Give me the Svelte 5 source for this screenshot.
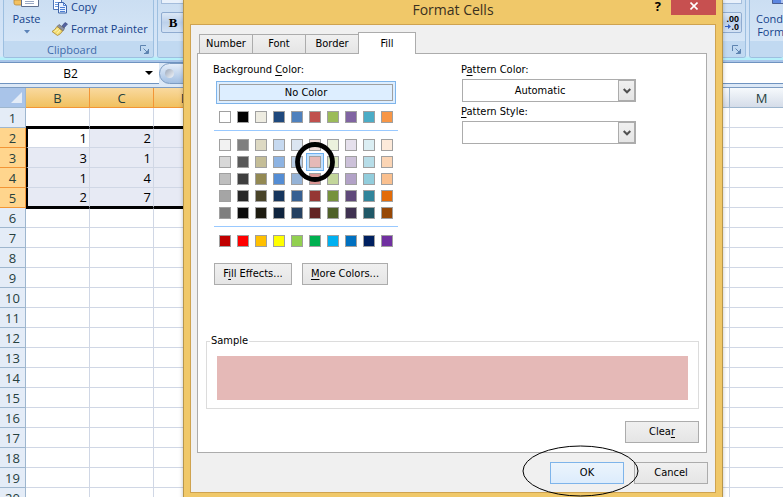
<script lang="ts">
	const columns = 'BCDEFGHIJKLMNOPQRSTUVWXYZ'.split('');
	const rows = Array.from({ length: 40 }, (_, i) => i + 1);
	const selectedColumns = ['B', 'C', 'D', 'E'];
	const cells: Record<string, number> = { B2: 1, C2: 2, B3: 3, C3: 1, B4: 1, C4: 4, B5: 2, C5: 7 };

	const tabs = ['Number', 'Font', 'Border', 'Fill'];

	const themeColors = [
		['#ffffff', '#000000', '#eeece1', '#1f497d', '#4f81bd', '#c0504d', '#9bbb59', '#8064a2', '#4bacc6', '#f79646']
	];
	const tintColors = [
		['#f2f2f2', '#7f7f7f', '#ddd9c3', '#c6d9f0', '#dbe5f1', '#f2dcdb', '#ebf1dd', '#e5e0ec', '#dbeef3', '#fdeada'],
		['#d8d8d8', '#595959', '#c4bd97', '#8db3e2', '#b8cce4', '#e5b9b7', '#d7e3bc', '#ccc1d9', '#b7dde8', '#fbd5b5'],
		['#bfbfbf', '#3f3f3f', '#938953', '#548dd4', '#95b3d7', '#d99694', '#c3d69b', '#b2a2c7', '#92cddc', '#fac08f'],
		['#a5a5a5', '#262626', '#494429', '#17365d', '#366092', '#953734', '#76923c', '#5f497a', '#31859b', '#e36c09'],
		['#7f7f7f', '#0c0c0c', '#1d1b10', '#0f243e', '#244061', '#632423', '#4f6128', '#3f3151', '#205867', '#974806']
	];
	const standardColors = [
		['#c00000', '#ff0000', '#ffc000', '#ffff00', '#92d050', '#00b050', '#00b0f0', '#0070c0', '#002060', '#7030a0']
	];

	let activeTab = $state('Fill');
	let fillColor = $state('#e5b9b7');

	function isSelectedRow(row: number) {
		return row >= 2 && row <= 5;
	}
</script>

{#snippet launcher()}
	<svg class="launcher" width="9" height="9" viewBox="0 0 9 9" fill="none" stroke="#5d83b0">
		<path d="M.5 6V.5H6M8.500 4v4.500H4M3.500 3.500l4 4" />
		<path d="M5 8h3V5z" fill="#5d83b0" stroke="none" />
	</svg>
{/snippet}

{#snippet palette(grid: string[][])}
	<div class="palette">
		{#each grid as line}
			{#each line as color}
				<div class="swatch-slot">
					<button
						class="swatch"
						class:picked={color === fillColor}
						style:background-color={color}
						aria-label={color}
						onclick={() => (fillColor = color)}
					></button>
					{#if color === '#e5b9b7'}
						<svg class="ring" width="40" height="40" viewBox="0 0 40 40" fill="none">
							<circle cx="20" cy="20" r="17.500" stroke="#000" stroke-width="4.800" />
						</svg>
					{/if}
				</div>
			{/each}
		{/each}
	</div>
{/snippet}

{#snippet chevron()}
	<span class="combo-arrow">
		<svg width="8" height="6" viewBox="0 0 8 6" fill="none" stroke="#505050" stroke-width="2">
			<path d="M.7 1L4 4.300 7.300 1" />
		</svg>
	</span>
{/snippet}

<main class="workbook">
	<header class="ribbon">
		<section class="group clipboard">
			<div class="group-body">
				<button class="paste">
					<svg width="28" height="8" viewBox="0 0 28 8">
						<path d="M1 0h9v5H3q-2 0-2-2z" fill="#f3c160" stroke="#b98b3c" stroke-width=".8" />
						<path d="M8.500 0v6.500h17V0" fill="#fff" stroke="#5f6f8d" />
						<path d="M12 1.500h9M12 3.500h9" stroke="#9aa9c4" />
					</svg>
					Paste
					<svg width="6" height="4" viewBox="0 0 6 4"><path d="M0 0h6L3 3.500z" fill="#5c83b8" /></svg>
				</button>
				<div class="clip-actions">
					<button>
						<svg width="16" height="14" viewBox="0 0 16 14">
							<path d="M1.500 0v9.500h8V0" fill="#fff" stroke="#4f76b8" />
							<path d="M3 2.500h5M3 4.500h5M3 6.500h5" stroke="#6f9be0" />
							<path d="M6.500 2.500h5l3 3v7.500h-8z" fill="#e8f1ff" stroke="#3d64a8" />
							<path d="M11.500 2.500v3h3M8 7.500h5M8 9.500h5M8 11.500h5" fill="none" stroke="#4c7fd4" />
						</svg>
						Copy
					</button>
					<button>
						<svg width="16" height="14" viewBox="0 0 16 14">
							<path d="M10 4l3-3.500 2.500 1.500-3.500 4z" fill="#5563a0" stroke="#333f78" stroke-width=".6" />
							<path d="M7 2.500l5.500 4-1.500 2.500-6-4.500z" fill="#8f93a3" stroke="#555" stroke-width=".6" />
							<path d="M5 4.500l5.500 4.500Q9 12 5.500 13.500L0 9.500q3-1.500 5-5z" fill="#f2dc72" stroke="#a8842f" stroke-width=".8" />
							<path d="M2.500 9.500l4-3M5 11.500l3-3.500" stroke="#fff6bd" />
						</svg>
						Format Painter
					</button>
				</div>
			</div>
			<footer><span>Clipboard</span>{@render launcher()}</footer>
		</section>
		<section class="group font">
			<div class="group-body stack">
				<div class="field-end"></div>
				<button class="tool bold">B</button>
			</div>
			<footer><span></span></footer>
		</section>
		<section class="group number">
			<div class="group-body stack end">
				<div class="field-end"></div>
				<button class="tool decimals" aria-label="Decrease decimal">
					<span>.00</span>
					<span><svg width="6" height="5" viewBox="0 0 6 5"><path d="M0 2h3V0l3 2.500L3 5V3H0z" fill="#3460c8" /></svg>.0</span>
				</button>
			</div>
			<footer><span></span>{@render launcher()}</footer>
		</section>
		<section class="group styles">
			<div class="group-body">
				<button class="conditional">
					<svg width="28" height="4" viewBox="0 0 28 4">
						<path d="M.5 0v3.500h27V0" fill="#5b86e0" stroke="#4b5f93" />
						<path d="M10 0v3" stroke="#fff" />
					</svg>
					<span>Conditional<br />Formatting</span>
				</button>
			</div>
			<footer><span></span></footer>
		</section>
	</header>

	<div class="formula-bar">
		<div class="name-box">
			<input type="text" value="B2" aria-label="Name box" />
			<svg width="8" height="4" viewBox="0 0 8 4"><path d="M0 0h8L4 4z" fill="#000" /></svg>
		</div>
		<div class="nub"><span></span></div>
		<input class="formula" type="text" aria-label="Formula" />
	</div>

	<table class="sheet">
		<thead>
			<tr>
				<th class="corner" aria-label="Select all">
					<svg width="11" height="11" viewBox="0 0 11 11"><path d="M11 0v11H0z" fill="#e4ecf7" /></svg>
				</th>
				{#each columns as column}
					<th class:hot={selectedColumns.includes(column)}>{column}</th>
				{/each}
			</tr>
		</thead>
		<tbody>
			{#each rows as row}
				<tr class:above={row === 1} class:first={row === 2} class:last={row === 5} class:below={row === 6}>
					<th class:hot={isSelectedRow(row)}>{row}</th>
					{#each columns as column}
						<td
							class:in={selectedColumns.includes(column)}
							class:selected={isSelectedRow(row) && selectedColumns.includes(column)}
							class:edge={isSelectedRow(row) && column === 'B'}
							class:active={row === 2 && column === 'B'}>{cells[column + row] ?? ''}</td
						>
					{/each}
				</tr>
			{/each}
		</tbody>
	</table>

	<div class="dialog" role="dialog" aria-label="Format Cells">
		<div class="titlebar">
			<h1>Format Cells</h1>
			<div class="window-buttons">
				<button class="help">?</button>
				<button class="close" aria-label="Close">
					<svg width="8" height="8" viewBox="0 0 8 8" stroke="#fff" stroke-width="1.600">
						<path d="M.5.5l7 7M7.500.5l-7 7" />
					</svg>
				</button>
			</div>
		</div>

		<div class="dialog-body">
			<div class="tabs" role="tablist">
				{#each tabs as tab}
					<button role="tab" aria-selected={tab === activeTab} onclick={() => (activeTab = tab)}>{tab}</button>
				{/each}
			</div>

			<div class="panel">
				<div class="options">
					<div class="background">
						<div class="caption">Background <u>C</u>olor:</div>
						<button class="no-color"><span>No Color</span></button>
						{@render palette(themeColors)}
						<hr />
						{@render palette(tintColors)}
						<hr />
						{@render palette(standardColors)}
						<div class="more">
							<button class="push">F<u>i</u>ll Effects...</button>
							<button class="push wide"><u>M</u>ore Colors...</button>
						</div>
					</div>

					<div class="pattern">
						<label for="pattern-color">P<u>a</u>ttern Color:</label>
						<div class="combo">
							<select id="pattern-color"><option>Automatic</option></select>
							{@render chevron()}
						</div>
						<label for="pattern-style"><u>P</u>attern Style:</label>
						<div class="combo">
							<select id="pattern-style"><option></option></select>
							{@render chevron()}
						</div>
					</div>
				</div>

				<fieldset>
					<legend>Sample</legend>
					<div class="sample" style:background-color={fillColor}></div>
				</fieldset>

				<div class="actions">
					<button class="push">Clea<u>r</u></button>
				</div>
			</div>

			<div class="actions footer">
				<div class="ok-slot">
					<button class="push default">OK</button>
					<svg class="oval" width="117" height="52" viewBox="0 0 117 52" fill="none">
						<ellipse cx="58.500" cy="26" rx="57.500" ry="25" stroke="#000" />
					</svg>
				</div>
				<button class="push">Cancel</button>
			</div>
		</div>
	</div>
</main>

<style>
	:global(body) {
		margin: 0;
	}

	.workbook {
		position: relative;
		height: 100vh;
		overflow: hidden;
		background: #fff;
		font-family: 'Open Sans', 'Noto Sans', sans-serif;
		font-size: 11px;
		color: #000;
	}

	.workbook * {
		box-sizing: border-box;
	}

	button,
	input,
	select {
		margin: 0;
		padding: 0;
		border: 0;
		border-radius: 0;
		background: none;
		font: inherit;
		color: inherit;
	}

	svg {
		display: block;
		flex: none;
	}

	u {
		text-underline-offset: 2px;
	}

	/* ribbon */
	.ribbon {
		display: flex;
		gap: 3px;
		height: 62px;
		padding: 0 0 4px 3px;
		background: linear-gradient(#cfe0f4 0, #d5e6f8 56px, #b5f0fa 58px, #b5f0fa 60px, #a9c5e8 60px);
		color: #15428b;
	}

	.group {
		display: flex;
		flex-direction: column;
		overflow: hidden;
		border: 1px solid #9dbfe0;
		border-top: 0;
		border-radius: 0 0 3px 3px;
		background: linear-gradient(#cbdef2, #d9e8f8);
	}

	.group.clipboard {
		width: 151px;
	}

	.group.font {
		width: 300px;
	}

	.group.number {
		flex: 1;
	}

	.group.styles {
		width: 34px;
		border-right: 0;
	}

	.group-body {
		display: flex;
		flex: 1;
		gap: 3px;
	}

	.group footer {
		display: flex;
		align-items: center;
		height: 16px;
		padding-right: 4px;
		background: #c1d9f1;
		color: #3e6aaa;
	}

	.group footer span {
		flex: 1;
		text-align: center;
	}

	.paste {
		display: flex;
		flex-direction: column;
		align-items: center;
		width: 45px;
		line-height: 22px;
	}

	.clip-actions button {
		display: flex;
		align-items: center;
		gap: 3px;
		height: 22px;
		line-height: 14px;
		white-space: nowrap;
	}

	.clip-actions button:first-child {
		height: 14px;
		margin-bottom: 4px;
	}

	.stack {
		flex-direction: column;
		gap: 8px;
		padding: 0 3px;
	}

	.stack.end {
		align-items: flex-end;
	}

	.field-end {
		width: 100%;
		height: 4px;
		border: 1px solid #a4bddc;
		border-top: 0;
		background: #e9f1fb;
	}

	.tool {
		width: 24px;
		height: 21px;
		border: 1px solid #8fabd0;
		border-radius: 2px;
		background: linear-gradient(#dce8f6, #bdd1eb 50%, #d3e2f4);
		color: #000;
	}

	.tool.bold {
		font: bold 13px 'Liberation Serif', serif;
	}

	.tool.decimals {
		display: flex;
		flex-direction: column;
		align-items: flex-end;
		justify-content: center;
		padding-right: 2px;
		font: bold 9px/8px 'Liberation Sans', sans-serif;
	}

	.tool.decimals span {
		display: flex;
		align-items: center;
	}

	.conditional {
		display: flex;
		flex-direction: column;
		align-items: flex-start;
		gap: 8px;
		padding-left: 6px;
		line-height: 13px;
	}

	.conditional svg {
		margin-left: 16px;
	}

	/* formula bar */
	.formula-bar {
		display: flex;
		height: 26px;
		border-top: 1px solid #6f93c0;
		border-bottom: 1px solid #7d9cc2;
		padding-bottom: 3px;
		background: #dce8f6;
	}

	.name-box {
		display: flex;
		align-items: center;
		width: 159px;
		padding-right: 6px;
		border-bottom: 1px solid #6f93c0;
		background: #fff;
		font-size: 12px;
	}

	.name-box input {
		flex: 1;
		min-width: 0;
		padding-right: 4px;
		text-align: center;
	}

	.nub {
		width: 60px;
		padding: 5px;
		border: 1px solid #7d9cc2;
		border-radius: 11px 0 0 11px;
		background: linear-gradient(#e6effa, #a3bfe2);
	}

	.nub span {
		display: block;
		width: 9px;
		height: 9px;
		border-radius: 50%;
		background: linear-gradient(135deg, #9aa6b8, #f4f7fb);
	}

	.formula {
		flex: 1;
		border-bottom: 1px solid #6f93c0;
		background: #fff;
	}

	/* sheet */
	.sheet {
		table-layout: fixed;
		width: 1626px;
		border-spacing: 0;
		font-size: 13px;
		line-height: 16px;
	}

	.sheet th,
	.sheet td {
		width: 64px;
		height: 20px;
		padding: 0;
		border: solid #d0d7e5;
		border-width: 0 1px 1px 0;
	}

	.sheet th {
		border-color: #9eb6ce;
		background: #e4ecf7;
		font-weight: 400;
		color: #27413e;
	}

	.sheet th:first-child {
		width: 26px;
	}

	.sheet thead th {
		background: linear-gradient(#f6f9fc, #d5dde9);
	}

	.sheet th.hot {
		border-color: #f29536;
		background: #ffd58d;
	}

	.sheet thead th.hot {
		background: linear-gradient(#f9d99f, #f1c15f);
	}

	.sheet thead .corner {
		background: #a9c4e9;
	}

	.corner svg {
		margin-left: 11px;
	}

	.sheet td {
		padding-right: 2px;
		text-align: right;
	}

	.sheet td.selected {
		background: #e7eaf4;
	}

	.sheet td.active {
		background: #fff;
	}

	.sheet td.edge {
		border-left: 2px solid #000;
	}

	.above td.in,
	.last td.in {
		border-bottom: 2px solid #000;
	}

	.first td.in,
	.below td.in {
		border-top: 1px solid #000;
	}

	/* dialog */
	.dialog {
		position: absolute;
		top: 0;
		left: 183px;
		width: 540px;
		padding: 0 6px 7px;
		border: solid #b8964a;
		border-width: 0 1px;
		background: #f0c869;
		box-shadow: 0 0 4px rgba(0, 0, 0, 0.25);
		font-family: 'DejaVu Sans Condensed', 'DejaVu Sans', sans-serif;
	}

	.titlebar {
		display: grid;
		grid-template-columns: 1fr auto 1fr;
		height: 24px;
		font-family: 'Open Sans', 'Noto Sans', sans-serif;
	}

	.titlebar h1 {
		grid-column: 2;
		margin: 0;
		font-size: 14px;
		font-weight: 400;
		line-height: 20px;
		color: #3a3020;
	}

	.window-buttons {
		display: flex;
		justify-content: flex-end;
		align-items: flex-start;
		gap: 10px;
	}

	.help {
		font-size: 13px;
		font-weight: 700;
		line-height: 12px;
	}

	.close {
		display: grid;
		place-items: center;
		width: 45px;
		height: 15px;
		padding-bottom: 4px;
		background: #c75050;
	}

	.dialog-body {
		padding: 7px 7px 8px 6px;
		border: 1px solid #cfa350;
		background: #f0f0f0;
	}

	.tabs {
		display: flex;
		align-items: flex-end;
		height: 21px;
		padding-left: 2px;
	}

	.tabs button {
		width: 54px;
		height: 19px;
		margin-right: -1px;
		border: 1px solid #acacac;
		border-bottom: 0;
		background: linear-gradient(#f0f0f0, #e5e5e5);
		line-height: 18px;
	}

	.tabs button[aria-selected='true'] {
		z-index: 1;
		width: 58px;
		height: 22px;
		margin-bottom: -1px;
		background: #fff;
	}

	.panel {
		margin-right: 1px;
		padding: 8px 7px 9px 8px;
		border: 1px solid #acacac;
		background: #fff;
	}

	.options {
		display: flex;
		gap: 64px;
		padding: 0 0 48px 8px;
	}

	.background {
		width: 184px;
	}

	.caption,
	.pattern label {
		display: block;
		margin-left: -1px;
		line-height: 16px;
	}

	.no-color {
		display: block;
		width: 180px;
		height: 23px;
		margin: 3px 2px 7px;
		padding: 2px;
		border: 1px solid #7eb4ea;
		background: #ddeeff;
	}

	.no-color span {
		display: block;
		border: 1px solid #a0a0a0;
		line-height: 15px;
	}

	.palette {
		display: grid;
		grid-template-columns: repeat(10, 12px);
		gap: 5px 6px;
		padding-left: 5px;
	}

	.swatch-slot {
		position: relative;
		height: 12px;
	}

	.swatch {
		display: block;
		width: 12px;
		height: 12px;
		border: 1px solid #a0a0a0;
	}

	.swatch.picked {
		position: relative;
		z-index: 1;
		box-shadow:
			0 0 0 2px #c4e0fb,
			0 0 0 3px #6cb0f0;
	}

	.ring {
		position: absolute;
		top: -14px;
		left: -14px;
		z-index: 2;
		pointer-events: none;
	}

	hr {
		height: 1px;
		margin: 7px 0 8px;
		border: 0;
		background: #99c9ff;
	}

	.more {
		display: flex;
		gap: 10px;
		margin-top: 16px;
	}

	.push {
		width: 74px;
		height: 22px;
		border: 1px solid #acacac;
		background: linear-gradient(#f0f0f0, #e5e5e5);
		line-height: 18px;
		white-space: nowrap;
	}

	.more .push {
		width: 78px;
	}

	.more .push.wide {
		width: 86px;
	}

	.push.default {
		border-color: #7eb4ea;
		background: linear-gradient(#ecf4fc, #dcecfc);
	}

	.pattern {
		width: 174px;
	}

	.combo {
		display: grid;
		height: 23px;
		margin: 1px 0 2px;
		border: 1px solid #acacac;
	}

	.combo select {
		grid-area: 1 / 1;
		appearance: none;
		padding-right: 18px;
		background: #fff;
		text-align-last: center;
	}

	.combo-arrow {
		display: grid;
		grid-area: 1 / 1;
		place-items: center;
		justify-self: end;
		width: 17px;
		border: 1px solid #acacac;
		background: linear-gradient(#f0f0f0, #e5e5e5);
		pointer-events: none;
	}

	fieldset {
		margin: 0;
		padding: 7px 10px 8px;
		border: 1px solid #dcdcdc;
	}

	legend {
		margin-left: -7px;
		padding: 0 1px;
		line-height: 16px;
	}

	.sample {
		height: 44px;
	}

	.actions {
		display: flex;
		justify-content: flex-end;
		gap: 10px;
		margin-top: 12px;
	}

	.actions.footer {
		margin-top: 9px;
	}

	.ok-slot {
		position: relative;
	}

	.oval {
		position: absolute;
		top: -17px;
		left: -28px;
		pointer-events: none;
	}
</style>
